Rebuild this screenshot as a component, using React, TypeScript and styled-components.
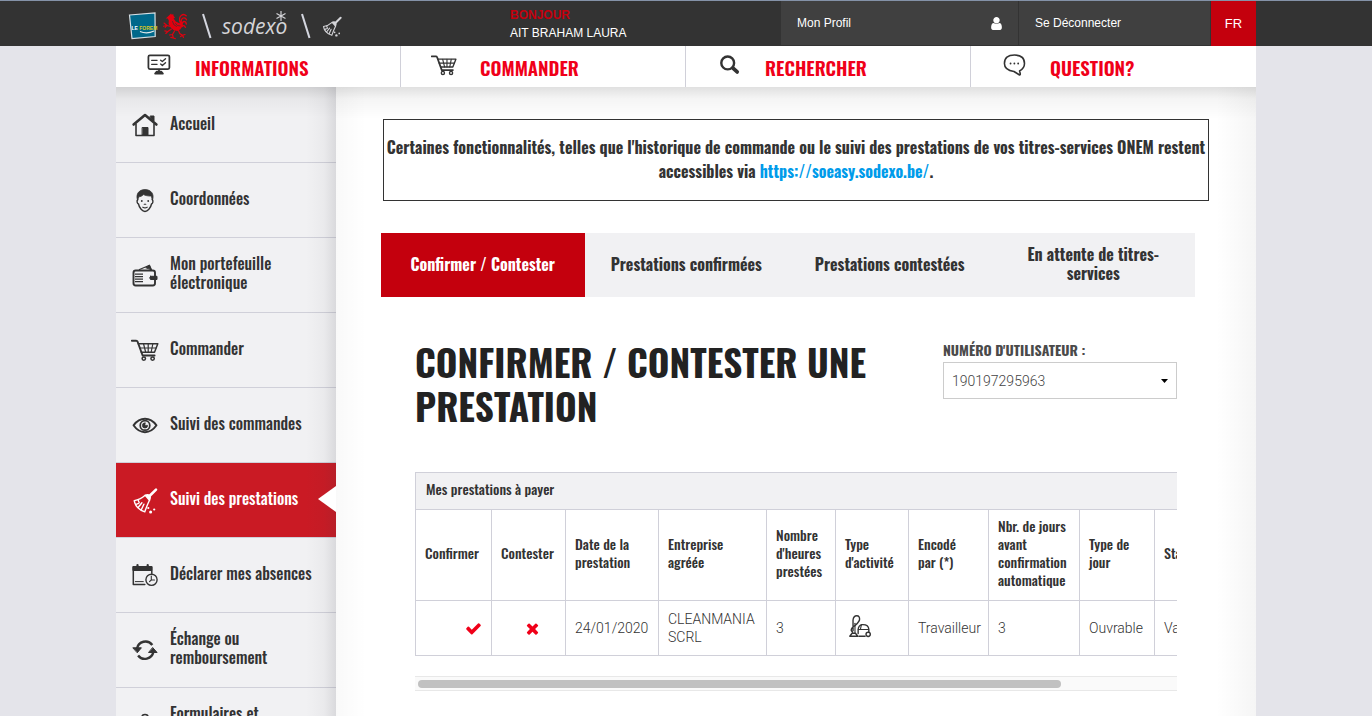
import React from "react";
import styled, { createGlobalStyle, css } from "styled-components";

const narrow = `Oswald, "Liberation Sans Narrow", "Roboto Condensed", "Liberation Sans", sans-serif`;
const sans = `"Liberation Sans", Arial, sans-serif`;
const light = `Roboto, "Liberation Sans", sans-serif`;

const c = {
  ink: "#333333",
  red: "#c4000d",
  brightRed: "#f00019",
  line: "#d0d0d9",
  pale: "#f1f1f3",
};

const GlobalStyle = createGlobalStyle`
  *, *::before, *::after { box-sizing: border-box; }
  html { scrollbar-width: none; }
  body {
    margin: 0;
    background: #e4e4ea;
    color: ${c.ink};
    font-family: ${sans};
    font-size: 14px;
  }
  a { color: inherit; text-decoration: none; }
  button { font: inherit; border: 0; cursor: pointer; }
  ul { list-style: none; margin: 0; padding: 0; }
`;

/* ---------- top bar ---------- */

const TopBar = styled.header`
  background: ${c.ink};
  border-top: 1px solid #8492a8;
`;

const Container = styled.div`
  max-width: 1140px;
  margin: 0 auto;
`;

const TopBarInner = styled(Container)`
  display: flex;
  height: 45px;
`;

const Brands = styled.div`
  display: flex;
  align-items: center;
  width: 394px;
  padding: 4px 0 0 12px;
`;

const Slash = styled.svg`
  margin: 0 9px 0 13px;
`;

const Sodexo = styled.a`
  display: flex;
  color: #d4d4d8;
  font: italic 21px/24px "Open Sans", sans-serif;
`;

const Star = styled.svg`
  margin-left: -12px;
  margin-top: -4px;
`;

const Greeting = styled.div`
  flex: 1;
  padding-top: 5px;
  color: #fff;
  font-size: 12px;
  line-height: 18px;

  strong {
    display: block;
    color: ${c.red};
    font-weight: 700;
  }
`;

const TopLink = styled.a<{ $width: number }>`
  display: flex;
  align-items: center;
  justify-content: space-between;
  width: ${(p) => p.$width}px;
  height: 44px;
  padding: 0 14px 0 16px;
  background: #404040;
  border-right: 1px solid ${c.ink};
  color: #fff;
  font-size: 12px;
`;

const Language = styled.button`
  width: 45px;
  background: ${c.red};
  color: #fff;
  font-size: 13px;
`;

/* ---------- main navigation ---------- */

const MainNav = styled.nav`
  display: grid;
  grid-template-columns: repeat(4, 1fr);
  height: 41px;
  background: #fff;
`;

const NavLink = styled.a`
  display: flex;
  align-items: center;
  padding-left: 30px;
  border-right: 1px solid ${c.line};
  color: ${c.brightRed};
  font: 600 19px/40px ${narrow};
  text-transform: uppercase;

  &:last-child {
    border-right: 0;
  }
  svg {
    width: 26px;
    height: 26px;
    margin: -4px 23px 0 0;
    color: ${c.ink};
  }
`;

/* ---------- columns ---------- */

const Columns = styled(Container)`
  display: flex;
`;

const Sidebar = styled.aside`
  position: relative;
  flex: none;
  width: 220px;
  padding-top: 1px;
  background: ${c.pale};

  &::after {
    content: "";
    position: absolute;
    inset: 0;
    pointer-events: none;
    background:
      linear-gradient(to bottom, rgba(0, 0, 0, 0.13), rgba(0, 0, 0, 0.04) 12px, transparent 30px),
      linear-gradient(to left, rgba(60, 60, 70, 0.13), rgba(60, 60, 70, 0.04) 12px, transparent 30px);
  }
`;

const SideLink = styled.a<{ $active?: boolean }>`
  position: relative;
  display: flex;
  align-items: center;
  height: 75px;
  padding: 0 15px 4px;
  border-bottom: 1px solid ${c.line};
  font: 500 16px/19px ${narrow};

  svg {
    flex: none;
    width: 28px;
    height: 28px;
    margin: 3px 11px 0 0;
  }

  ${(p) =>
    p.$active &&
    css`
      background: #ca1a24;
      color: #fff;

      &::after {
        content: "";
        position: absolute;
        z-index: 1;
        right: 0;
        top: 23px;
        border: solid transparent;
        border-width: 13px 18px 13px 0;
        border-right-color: #fff;
      }
    `}
`;

const Main = styled.main`
  flex: 1;
  min-width: 0;
  padding: 32px 45px 40px;
  background:
    linear-gradient(to bottom, rgba(0, 0, 0, 0.12), rgba(0, 0, 0, 0.04) 12px, transparent 32px),
    linear-gradient(to right, rgba(0, 0, 0, 0.025), transparent 30px),
    linear-gradient(to left, rgba(0, 0, 0, 0.04), transparent 40px),
    #fff;
`;

const Notice = styled.p`
  margin: 0 2px;
  padding: 15px 0 17px;
  border: 1px solid ${c.ink};
  font: 700 16px/24px ${narrow};
  text-align: center;

  a {
    color: #009bea;
  }
`;

const Tabs = styled.div`
  display: flex;
  margin: 32px 16px 0 0;
  background: ${c.pale};
`;

const Tab = styled.button<{ $active?: boolean }>`
  flex: 1 1 0;
  height: 64px;
  padding: 0 24px 2px;
  background: ${(p) => (p.$active ? c.red : "transparent")};
  color: ${(p) => (p.$active ? "#fff" : c.ink)};
  font: 700 16px/19px ${narrow};
`;

const Panel = styled.section`
  padding: 0 34px;
`;

const PanelHead = styled.div`
  display: flex;
  justify-content: space-between;
  padding: 43px 0 44px;
`;

const Title = styled.h1`
  width: 480px;
  margin: 0;
  color: #222;
  font: 700 37px/44px ${narrow};
  text-transform: uppercase;
`;

const Field = styled.div`
  display: flex;
  flex-direction: column;
  width: 234px;
`;

const Label = styled.label`
  color: #4a4a4a;
  font: 700 14px/19px ${narrow};
  text-transform: uppercase;
`;

const SelectBox = styled.div`
  display: grid;
  align-items: center;
  margin-top: 3px;

  > * {
    grid-area: 1 / 1;
  }
  svg {
    justify-self: end;
    margin-right: 9px;
    pointer-events: none;
  }
`;

const Select = styled.select`
  appearance: none;
  width: 100%;
  height: 37px;
  padding: 0 8px;
  border: 1px solid #ccc;
  border-radius: 0;
  background: #fff;
  color: #444;
  font: 300 14px/20px ${light};
`;

/* ---------- table ---------- */

const TableScroll = styled.div`
  overflow-x: auto;
  scrollbar-width: none;
`;

const Table = styled.table`
  width: 893px;
  table-layout: fixed;
  border-collapse: collapse;

  caption {
    padding: 7px 10px 11px;
    background: ${c.pale};
    border: 1px solid ${c.line};
    border-bottom: 0;
    font: 500 14px/18px ${narrow};
    text-align: left;
  }
  th,
  td {
    padding: 0 9px;
    border: 1px solid ${c.line};
    text-align: left;
    vertical-align: middle;
  }
  th {
    height: 91px;
    padding-bottom: 4px;
    font: 500 14px/18px ${narrow};
  }
  td {
    height: 55px;
    font: 300 14px/18px ${light};
  }
  td > svg {
    display: block;
    margin: -4px 0 0 2px;
  }
`;

const RowAction = styled.button<{ $align: string }>`
  display: block;
  width: 100%;
  padding: 0 0 0 8px;
  background: none;
  color: ${c.brightRed};
  text-align: ${(p) => p.$align};

  svg {
    vertical-align: middle;
  }
`;

const ScrollTrack = styled.div`
  height: 15px;
  margin-top: 20px;
  padding: 3px 3px;
  background: #fafafa;
  border: solid #e8e8e8;
  border-width: 1px 0;
`;

const ScrollThumb = styled.div`
  width: 85%;
  height: 8px;
  border-radius: 4px;
  background: #c1c1c1;
`;

/* ---------- drawings ---------- */

type IconProps = { size?: number; color?: string };

const Stroke = ({ size = 28, color = "currentColor", children, w = 1.6 }: IconProps & { children: React.ReactNode; w?: number }) => (
  <svg width={size} height={size} viewBox="0 0 28 28" fill="none" stroke={color} strokeWidth={w} strokeLinecap="round" strokeLinejoin="round" aria-hidden="true">
    {children}
  </svg>
);

const HomeIcon = () => (
  <Stroke>
    <path d="M2.600 13.500 14 4l11.400 9.500" strokeWidth="2.600" />
    <path d="M5 13v11.500h18V13" />
    <path d="M19.500 5h3.500v5l-3.500-3z" fill="currentColor" strokeWidth="1" />
    <path d="M11.500 16.500h5.500V24h-5.500z" fill="currentColor" strokeWidth="1" />
  </Stroke>
);

const FaceIcon = () => (
  <Stroke w={1.4}>
    <path d="M6.800 13.500C5.400 15 6.200 17.500 7.500 18c.8 4.200 4 7.500 6.500 7.500s5.700-3.300 6.500-7.500c1.300-.5 2.100-3 .7-4.500" />
    <path d="M6.500 14C4.500 8 8 3.600 14 3.600S23.500 8 21.500 14c-.6-1-.8-2.400-1-4-3.600.2-6.400-.6-8-1.400-1.600 1.600-3.200 2-4.700 2.200-.3 1.200-.7 2.200-1.300 3.200z" fill="currentColor" strokeWidth=".8" />
    <circle cx="10.800" cy="15" r=".9" fill="currentColor" stroke="none" />
    <circle cx="17.200" cy="15" r=".9" fill="currentColor" stroke="none" />
    <path d="M13.200 18.200h1.600M11.800 21.200q2.200 1.400 4.400 0" strokeWidth="1.100" />
  </Stroke>
);

const WalletIcon = () => (
  <Stroke>
    <rect x="2.500" y="9.500" width="21.500" height="15" rx="2.200" strokeWidth="1.900" />
    <path d="M8.500 8.500 18 4.500l1.800 4" strokeWidth="1.300" />
    <path d="M15 6.500 18.500 4l2 4.500z" fill="currentColor" strokeWidth="1" />
    <path d="M4 13.200h8M4 15.700h8M4 18.200h8M4 20.700h8" strokeWidth="1.200" strokeLinecap="butt" />
    <path d="M19.500 15.300h6.500v3.200h-6.500q-1.600-1.600 0-3.200z" fill="currentColor" strokeWidth="1" />
  </Stroke>
);

const CartIcon = () => (
  <Stroke w={1.500}>
    <path d="M.8 4.700h4.400q1 0 1.400 1l5 13.800h12" strokeWidth="1.900" />
    <path d="M7.300 7.700h19.500l-3.300 8.500H10.300" />
    <path d="M12.600 8l2 8M17.200 8v8M21.800 8l-1.600 8M8.800 12h16.200" strokeWidth="1.200" />
    <circle cx="12.800" cy="22.600" r="1.700" />
    <circle cx="21.600" cy="22.600" r="1.700" />
  </Stroke>
);

const EyeIcon = () => (
  <Stroke w={1.900}>
    <path d="M2.500 14.300C6 9.700 10 7.800 14 7.800s8 1.900 11.500 6.500C22 19.300 18 21.200 14 21.200S6 19.300 2.500 14.300z" />
    <circle cx="14" cy="14.400" r="4.800" strokeWidth="1.700" />
    <path d="M14 11.800a2.600 2.600 0 1 0 2.600 2.600H14z" fill="currentColor" strokeWidth=".8" />
  </Stroke>
);

const BroomIcon = ({ size, color }: IconProps) => (
  <Stroke size={size} color={color} w={1.400}>
    <path d="M25 3.600 18 10.500" strokeWidth="2.600" />
    <path d="M14.200 9.300q2.800-1.300 4.300.3t0 4.600z" fill={color ?? "currentColor"} />
    <path d="M14.200 9.300Q9 13.800 3.200 14.700q1.200 7.800 10.600 11.200 1.800-5.800 4.700-11.700" />
    <path d="M5 18.300l2.700-1M7.300 21.300l3.600-4.600M10.300 23.800l2.600-5.600M7.200 14.200l1 2.500" />
    <circle cx="17.300" cy="22" r="1.100" fill={color ?? "currentColor"} stroke="none" />
    <circle cx="19.600" cy="26" r="1.500" fill={color ?? "currentColor"} stroke="none" />
    <circle cx="23.200" cy="23.500" r="1.100" fill={color ?? "currentColor"} stroke="none" />
  </Stroke>
);

const CalendarIcon = () => (
  <Stroke w={1.500}>
    <path d="M20.800 12.500V6H2.300v17.500h11.500" />
    <path d="M2.300 5.500h18.500v4H2.300z" fill="currentColor" strokeWidth="1" />
    <path d="M6.500 4v2.500M16.700 4v2.500" strokeWidth="2.200" />
    <path d="M4.300 20.600h8" strokeWidth="1" />
    <circle cx="20.500" cy="18.800" r="5.600" strokeWidth="1.400" />
    <path d="M20.300 15v4M20.300 19h3.200M20.300 19l-1.800 1.700" strokeWidth="1.100" />
  </Stroke>
);

const RefreshIcon = () => (
  <Stroke w={2.400}>
    <path d="M6 12.500a8.600 8.600 0 0 1 15.300-3.600" strokeLinecap="butt" />
    <path d="M22.400 15.800A8.600 8.600 0 0 1 7.100 19.400" strokeLinecap="butt" />
    <path d="M2.200 11.800h8.200l-3.900 4.700z" fill="currentColor" strokeWidth="1" />
    <path d="M17.900 16.500h8.200l-4.200-4.700z" fill="currentColor" strokeWidth="1" />
  </Stroke>
);

const FormIcon = () => (
  <Stroke w={1.500}>
    <path d="M6 6h16v19H6z" />
    <path d="M11 6q0-2.500 3-2.500T17 6M9 11h10M9 15h10M9 19h10" />
  </Stroke>
);

const ScreenIcon = () => (
  <Stroke w={1.900}>
    <rect x="2.600" y="3.600" width="22.600" height="14.800" rx="1.600" />
    <path d="M14 19v3M9.800 23.200l1.800-2h4.800l1.800 2z" fill="currentColor" />
    <path d="M6 9h6M6 13.300h6" strokeWidth="1.200" />
    <path d="M15.800 8.800l1.800 1.500 3.400-3M15.800 13l1.800 1.500 3.400-3" strokeWidth="1.500" />
  </Stroke>
);

const SearchIcon = () => (
  <Stroke w={2.600}>
    <circle cx="12.600" cy="11.800" r="6.900" />
    <path d="M18.300 17.300l4.500 4.200" strokeWidth="4" />
  </Stroke>
);

const QuestionIcon = () => (
  <Stroke w={1.700}>
    <path d="M20 20.500q5.300-3.200 5.300-8.200 0-9-10.800-9T3.700 12.300q0 7.200 10.300 8.700l6 3.800q1.500.2 0-4.300z" />
    <circle cx="10.300" cy="12.400" r="1" fill="currentColor" stroke="none" />
    <circle cx="14.400" cy="12.400" r="1" fill="currentColor" stroke="none" />
    <circle cx="18.500" cy="12.400" r="1" fill="currentColor" stroke="none" />
  </Stroke>
);

const VacuumIcon = () => (
  <Stroke size={26} w={1.500}>
    <path d="M6.500 19V7.500Q7 3 10.500 3t3 4.300Q13 9.500 9 13.300q-5 2.700-4.400 5.700l1.400 1.700" />
    <path d="M8.600 21.500V11" strokeWidth="1.200" />
    <path d="M3 25h8.600l-2.500-3.200H5.500zM13 25h6.500" />
    <path d="M12 22v-4q.3-5 4.500-5.500 6.600-.3 7 5v3" />
    <path d="M12.200 17.700h11M15.500 12.500l-1 5" strokeWidth="1.200" />
    <circle cx="22.800" cy="23" r="2.300" />
  </Stroke>
);

const glyphs = {
  user: "M1536 1399q0 109-62.500 187t-150.500 78h-854q-88 0-150.500-78t-62.500-187q0-85 8.500-160.500t31.500-152 58.500-131 94-89 134.500-34.500q131 128 313 128t313-128q76 0 134.500 34.500t94 89 58.500 131 31.500 152 8.500 160.500zm-256-887q0 159-112.500 271.500t-271.500 112.500-271.500-112.500-112.500-271.500 112.500-271.500 271.500-112.500 271.500 112.500 112.500 271.500z",
  check: "M1671 566q0 40-28 68l-724 724-136 136q-28 28-68 28t-68-28l-136-136-362-362q-28-28-28-68t28-68l136-136q28-28 68-28t68 28l294 295 656-657q28-28 68-28t68 28l136 136q28 28 28 68z",
  times: "M1490 1322q0 40-28 68l-136 136q-28 28-68 28t-68-28l-294-294-294 294q-28 28-68 28t-68-28l-136-136q-28-28-28-68t28-68l294-294-294-294q-28-28-28-68t28-68l136-136q28-28 68-28t68 28l294 294 294-294q28-28 68-28t68 28l136 136q28 28 28 68t-28 68l-294 294 294 294q28 28 28 68z",
};

const Glyph = ({ name, size }: { name: keyof typeof glyphs; size: number }) => (
  <svg width={size} height={size} viewBox="0 0 1792 1792" fill="currentColor" aria-hidden="true">
    <path d={glyphs[name]} />
  </svg>
);

const ForemLogo = () => (
  <svg width="30" height="28" viewBox="0 0 30 28" role="img" aria-label="Le Forem">
    <path d="M1.500 3 27 1l.2 23.500L4 26.500z" fill="#00688a" stroke="#d6dfe4" strokeWidth="1.200" />
    <text x="3.500" y="17.500" fontFamily="Liberation Sans" fontWeight="700" fontSize="5" fill="#fff">
      LE <tspan fill="#d8c81e">FOREM</tspan>
    </text>
    <path d="M12 19.500q7 3 14-.5" fill="none" stroke="#dfe7ea" strokeWidth="1.100" />
  </svg>
);

const Rooster = styled.svg`
  margin: 0 0 0 4px;
`;

const RoosterLogo = () => (
  <Rooster width="26" height="28" viewBox="0 0 26 28" role="img" aria-label="Wallonie" fill="none" stroke="#e3000f" strokeLinecap="round">
    <path
      d="M7.500 3 9 1.500l.8 1.200L11.300 2l.2 1.800 1.500 2-1.400.6 2.200 3.200 3.600 1.600 2.400-.4.8 3.200-2.200 3.200-3 1.800-3.600-.8-3.200-2.800-2-3.400.2-3.600-1-2-2 .2 1.600-1.600z"
      fill="#e3000f"
      stroke="none"
    />
    <path d="M18.500 11q-2.500-5 1-7.800 2.500-1.700 4.700.6M19.500 11.500q-1-4 1.500-5.500 2.500-.8 3.500 1.800M20 13q0-3 2-3.700 2 0 2.300 2.700M20 14.500q1.500-2 3.500.8" strokeWidth="1.300" />
    <path d="M8.500 14.500l-3.500-1M5 13.500l-3-2.500M5 13.500l-3.500.7M5 13.500l-1.800 2M9.500 17l-3.700 2.500M5.800 19.500l-3-.6M5.800 19.500l-2 2" strokeWidth="1.100" />
    <path d="M12.500 19l-2 3.500.8 3.500M11.300 26l-2.500-.6M11.300 26l2 .6M10.500 22.500l-3 .5M16.500 18.500l1.200 3 2.800 1.800M20.500 23.300l2.500-.8M20.500 23.300l1 2.200M20.500 23.300l-2 1.200" strokeWidth="1.200" />
    <path d="M10.500 9.500q.5 4 4 5M13.500 11.500q1.500 3 4.500 2.500" stroke={c.ink} strokeWidth=".7" />
  </Rooster>
);

const SlashMark = () => (
  <Slash width="12" height="26" viewBox="0 0 12 26" aria-hidden="true">
    <path d="M2 1l7.500 24" stroke="#d4d6df" strokeWidth="2" />
  </Slash>
);

/* ---------- data ---------- */

const navItems = [
  { label: "Informations", Icon: ScreenIcon },
  { label: "Commander", Icon: CartIcon },
  { label: "Rechercher", Icon: SearchIcon },
  { label: "Question?", Icon: QuestionIcon },
];

const sideItems = [
  { label: "Accueil", Icon: HomeIcon },
  { label: "Coordonnées", Icon: FaceIcon },
  { label: "Mon portefeuille électronique", Icon: WalletIcon },
  { label: "Commander", Icon: CartIcon },
  { label: "Suivi des commandes", Icon: EyeIcon },
  { label: "Suivi des prestations", Icon: BroomIcon, active: true },
  { label: "Déclarer mes absences", Icon: CalendarIcon },
  { label: "Échange ou remboursement", Icon: RefreshIcon },
  { label: "Formulaires et documents", Icon: FormIcon },
];

const tabs = ["Confirmer / Contester", "Prestations confirmées", "Prestations contestées", "En attente de titres-services"];

const columns = [
  { label: "Confirmer", width: 76 },
  { label: "Contester", width: 74 },
  { label: "Date de la prestation", width: 93 },
  { label: "Entreprise agréée", width: 108 },
  { label: "Nombre d'heures prestées", width: 69 },
  { label: "Type d'activité", width: 73 },
  { label: "Encodé par\u00a0(*)", width: 80 },
  { label: "Nbr. de jours avant confirmation automatique", width: 91 },
  { label: "Type de jour", width: 75 },
  { label: "Statut", width: 154 },
];

export default function App() {
  return (
    <>
      <GlobalStyle />
      <TopBar>
        <TopBarInner>
          <Brands>
            <ForemLogo />
            <RoosterLogo />
            <SlashMark />
            <Sodexo href="#">
              sodexo
              <Star width="12" height="12" viewBox="0 0 12 12" aria-hidden="true">
                <path d="M6 1v10M1.500 3.500l9 5M10.500 3.500l-9 5" stroke="#d4d4d8" strokeWidth="1.200" />
              </Star>
            </Sodexo>
            <SlashMark />
            <BroomIcon size={22} color="#d4d4d8" />
          </Brands>
          <Greeting>
            <strong>BONJOUR</strong>
            AIT BRAHAM LAURA
          </Greeting>
          <TopLink href="#" $width={238}>
            Mon Profil
            <Glyph name="user" size={15} />
          </TopLink>
          <TopLink href="#" $width={192}>
            Se Déconnecter
          </TopLink>
          <Language type="button">FR</Language>
        </TopBarInner>
      </TopBar>
      <Container>
        <MainNav>
          {navItems.map(({ label, Icon }) => (
            <NavLink href="#" key={label}>
              <Icon />
              {label}
            </NavLink>
          ))}
        </MainNav>
      </Container>
      <Columns>
        <Sidebar>
          <ul>
            {sideItems.map(({ label, Icon, active }) => (
              <li key={label}>
                <SideLink href="#" $active={active}>
                  <Icon />
                  {label}
                </SideLink>
              </li>
            ))}
          </ul>
        </Sidebar>
        <Main>
          <Notice>
            Certaines fonctionnalités, telles que l'historique de commande ou le suivi des prestations de vos
            titres-services ONEM restent accessibles via <a href="#">https://soeasy.sodexo.be/</a>.
          </Notice>
          <Tabs role="tablist">
            {tabs.map((label, i) => (
              <Tab key={label} type="button" role="tab" aria-selected={i === 0} $active={i === 0}>
                {label}
              </Tab>
            ))}
          </Tabs>
          <Panel>
            <PanelHead>
              <Title>Confirmer / Contester une prestation</Title>
              <Field>
                <Label htmlFor="user-number">Numéro d'utilisateur :</Label>
                <SelectBox>
                  <Select id="user-number">
                    <option>190197295963</option>
                  </Select>
                  <svg width="7" height="4" viewBox="0 0 7 4" aria-hidden="true">
                    <path d="M0 0h7L3.500 4z" />
                  </svg>
                </SelectBox>
              </Field>
            </PanelHead>
            <TableScroll>
              <Table>
                <caption>Mes prestations à payer</caption>
                <colgroup>
                  {columns.map((col) => (
                    <col key={col.label} width={col.width} />
                  ))}
                </colgroup>
                <thead>
                  <tr>
                    {columns.map((col) => (
                      <th key={col.label} scope="col">
                        {col.label}
                      </th>
                    ))}
                  </tr>
                </thead>
                <tbody>
                  <tr>
                    <td>
                      <RowAction type="button" $align="right" aria-label="Confirmer">
                        <Glyph name="check" size={17} />
                      </RowAction>
                    </td>
                    <td>
                      <RowAction type="button" $align="center" aria-label="Contester">
                        <Glyph name="times" size={17} />
                      </RowAction>
                    </td>
                    <td>24/01/2020</td>
                    <td>CLEANMANIA SCRL</td>
                    <td>3</td>
                    <td>
                      <VacuumIcon />
                    </td>
                    <td>Travailleur</td>
                    <td>3</td>
                    <td>Ouvrable</td>
                    <td>Validée</td>
                  </tr>
                </tbody>
              </Table>
            </TableScroll>
            <ScrollTrack>
              <ScrollThumb />
            </ScrollTrack>
          </Panel>
        </Main>
      </Columns>
    </>
  );
}
